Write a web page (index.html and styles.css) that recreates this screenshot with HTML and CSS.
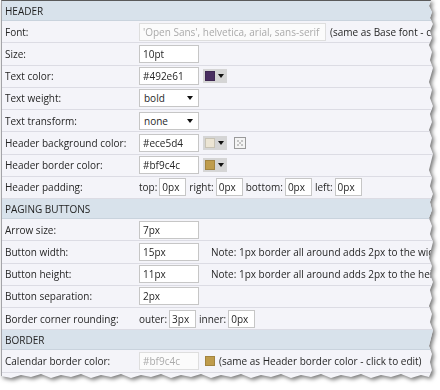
FILE: index.html
```html
<!DOCTYPE html>
<html lang="en">
<head>
    <meta charset="UTF-8">
    <title>Calendar Styles</title>
    <link rel="stylesheet" href="styles.css">
</head>
<body>
    <div class="shot">
        <div class="panel">
            <div class="section">HEADER</div>
            <div class="row">
                <div class="label">Font:</div>
                <div class="value">
                    <input type="text" class="field wide" value="'Open Sans', helvetica, arial, sans-serif" disabled>
                    <span class="hint">(same as Base font - click to edit)</span>
                </div>
            </div>
            <div class="row">
                <div class="label">Size:</div>
                <div class="value"><input type="text" class="field" value="10pt"></div>
            </div>
            <div class="row">
                <div class="label">Text color:</div>
                <div class="value">
                    <input type="text" class="field" value="#492e61">
                    <span class="swatch-btn"><span class="swatch purple"></span><span class="caret"></span></span>
                </div>
            </div>
            <div class="row">
                <div class="label">Text weight:</div>
                <div class="value"><span class="select">bold</span></div>
            </div>
            <div class="row">
                <div class="label">Text transform:</div>
                <div class="value"><span class="select">none</span></div>
            </div>
            <div class="row">
                <div class="label">Header background color:</div>
                <div class="value">
                    <input type="text" class="field" value="#ece5d4">
                    <span class="swatch-btn"><span class="swatch cream"></span><span class="caret"></span></span>
                    <svg class="clear-icon" width="12" height="12" viewBox="0 0 12 12">
                        <rect x="0.5" y="0.5" width="11" height="11" fill="#f4f4f4" stroke="#9a9a9a"/>
                        <path d="M3 3h2v2H3zM7 3h2v2H7zM5 5h2v2H5zM3 7h2v2H3zM7 7h2v2H7z" fill="#c4c4c4"/>
                    </svg>
                </div>
            </div>
            <div class="row">
                <div class="label">Header border color:</div>
                <div class="value">
                    <input type="text" class="field" value="#bf9c4c">
                    <span class="swatch-btn"><span class="swatch gold"></span><span class="caret"></span></span>
                </div>
            </div>
            <div class="row">
                <div class="label">Header padding:</div>
                <div class="value">
                    <span class="sub">top:</span><input type="text" class="field small" value="0px">
                    <span class="sub">right:</span><input type="text" class="field small" value="0px">
                    <span class="sub">bottom:</span><input type="text" class="field small" value="0px">
                    <span class="sub">left:</span><input type="text" class="field small" value="0px">
                </div>
            </div>

            <div class="section">PAGING BUTTONS</div>
            <div class="row">
                <div class="label">Arrow size:</div>
                <div class="value"><input type="text" class="field" value="7px"></div>
            </div>
            <div class="row">
                <div class="label">Button width:</div>
                <div class="value">
                    <input type="text" class="field" value="15px">
                    <span class="note">Note: 1px border all around adds 2px to the width</span>
                </div>
            </div>
            <div class="row">
                <div class="label">Button height:</div>
                <div class="value">
                    <input type="text" class="field" value="11px">
                    <span class="note">Note: 1px border all around adds 2px to the height</span>
                </div>
            </div>
            <div class="row">
                <div class="label">Button separation:</div>
                <div class="value"><input type="text" class="field" value="2px"></div>
            </div>
            <div class="row">
                <div class="label">Border corner rounding:</div>
                <div class="value">
                    <span class="sub">outer:</span><input type="text" class="field small" value="3px">
                    <span class="sub">inner:</span><input type="text" class="field small" value="0px">
                </div>
            </div>

            <div class="section">BORDER</div>
            <div class="row">
                <div class="label">Calendar border color:</div>
                <div class="value">
                    <input type="text" class="field" value="#bf9c4c" disabled>
                    <span class="swatch gold plain"></span>
                    <span class="hint">(same as Header border color - click to edit)</span>
                </div>
            </div>
            <div class="row"></div>
        </div>
    </div>
</body>
</html>
```

FILE: styles.css
```css
* {
    margin: 0;
    padding: 0;
    box-sizing: border-box;
    font-family: 'Open Sans', sans-serif;
}

body {
    background-color: #ffffff;
    width: 440px;
    height: 390px;
    overflow: hidden;
}

.shot {
    filter: drop-shadow(2px 2px 2px rgba(0, 0, 0, 0.55));
}

.panel {
    width: 436px;
    height: 380px;
    margin-left: 1px;
    background-color: #f4f4f9;
    border-top: 1px solid #5a5a5a;
    border-left: 1px solid #a4a4a8;
    overflow: hidden;
    color: #262626;
    font-size: 10px;
    clip-path: polygon(0 0, 430px 0, 428px 6px, 431px 12px, 429px 18px, 432px 24px, 429px 31px, 431px 38px, 428px 45px, 431px 52px, 429px 60px, 432px 68px, 430px 75px, 428px 82px, 431px 90px, 429px 98px, 432px 106px, 429px 114px, 431px 122px, 428px 130px, 431px 138px, 429px 146px, 432px 154px, 430px 162px, 428px 170px, 431px 178px, 429px 186px, 432px 194px, 429px 202px, 431px 210px, 428px 218px, 431px 226px, 429px 234px, 432px 242px, 430px 250px, 428px 258px, 431px 266px, 429px 274px, 432px 282px, 429px 290px, 431px 298px, 428px 306px, 431px 314px, 429px 322px, 432px 330px, 430px 338px, 428px 346px, 431px 354px, 429px 362px, 431px 370px, 428px 377px, 420px 375px, 410px 378px, 400px 374px, 390px 377px, 380px 375px, 370px 378px, 360px 374px, 350px 377px, 340px 375px, 330px 378px, 320px 374px, 310px 377px, 300px 375px, 290px 378px, 280px 374px, 270px 377px, 260px 375px, 250px 378px, 240px 374px, 230px 377px, 220px 375px, 210px 378px, 200px 374px, 190px 377px, 180px 375px, 170px 378px, 160px 374px, 150px 377px, 140px 375px, 130px 378px, 120px 374px, 110px 377px, 100px 375px, 90px 378px, 80px 374px, 70px 377px, 60px 375px, 50px 378px, 40px 374px, 30px 377px, 20px 375px, 10px 378px, 0 376px);
}

.section {
    height: 20px;
    padding-left: 3px;
    display: flex;
    align-items: center;
    background-color: #d8e2eb;
    border-bottom: 1px solid #c9d3dd;
    color: #1e1e1e;
}

.row {
    height: 22.25px;
    display: flex;
    align-items: center;
    border-bottom: 1px solid #dcdce4;
    white-space: nowrap;
}

.label {
    width: 137px;
    flex-shrink: 0;
    padding-left: 3px;
}

.value {
    display: flex;
    align-items: center;
}

.field {
    width: 60px;
    height: 18px;
    padding: 0 3px;
    border: 1px solid #c6c6c6;
    background: #fff;
    color: #262626;
    font-size: 10px;
}

.field:disabled {
    color: #aaa;
    border-color: #dedede;
    background: #fbfbfb;
}

.field.wide {
    width: 187px;
}

.field.small {
    width: 27px;
    padding: 0 2px;
}

.hint {
    margin-left: 4px;
}

.note {
    margin-left: 12px;
}

.sub {
    margin: 0 2px 0 0;
}

.field.small + .sub {
    margin-left: 3px;
}

.swatch-btn {
    display: flex;
    align-items: center;
    gap: 3px;
    height: 14px;
    margin-left: 4px;
    padding: 0 3px 0 2px;
    background-color: #d5d5d5;
}

.swatch {
    width: 10px;
    height: 10px;
    border: 1px solid rgba(0, 0, 0, 0.15);
}

.swatch.plain {
    margin-left: 6px;
}

.purple { background-color: #492e61; }
.cream { background-color: #ece5d4; }
.gold { background-color: #bf9c4c; }

.caret {
    width: 0;
    height: 0;
    border-left: 3px solid transparent;
    border-right: 3px solid transparent;
    border-top: 4px solid #111;
}

.select {
    position: relative;
    display: flex;
    align-items: center;
    width: 60px;
    height: 18px;
    padding: 0 4px;
    border: 1px solid #c6c6c6;
    background: #fff;
}

.select::after {
    content: "";
    position: absolute;
    right: 5px;
    top: 6px;
    border-left: 3px solid transparent;
    border-right: 3px solid transparent;
    border-top: 4px solid #111;
}

.clear-icon {
    margin-left: 7px;
}
```
